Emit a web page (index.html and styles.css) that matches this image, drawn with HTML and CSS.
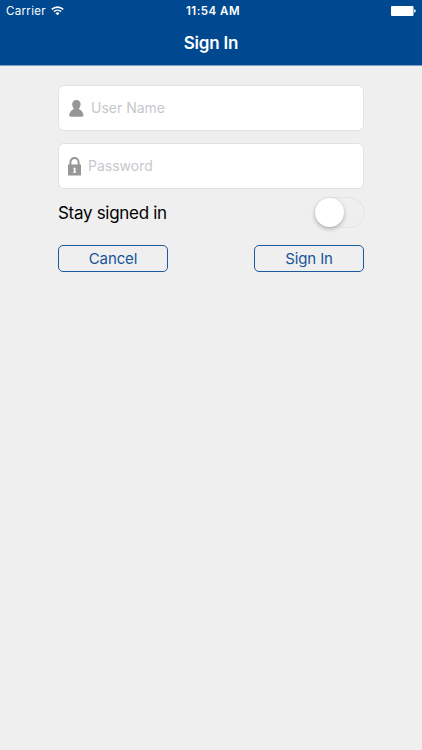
FILE: index.html
```html
<!DOCTYPE html>
<html lang="en">
<head>
<meta charset="utf-8">
<title>Sign In</title>
<link rel="stylesheet" href="styles.css">
</head>
<body>
<header class="header">
  <div class="status">
    <div class="carrier"><span>Carrier</span>
      <svg class="wifi" viewBox="0 0 13 10" fill="none" stroke="#fff" stroke-width="1.6"><path d="M.8 3.4a8.2 8.2 0 0 1 11.4 0M2.9 5.7a5.2 5.2 0 0 1 7.2 0"/><path d="M4.5 7.2a2.9 2.9 0 0 1 4 0l-2 2.1z" fill="#fff" stroke="none"/></svg>
    </div>
    <span class="time">11:54 AM</span>
    <svg class="battery" viewBox="0 0 25 10" fill="#fff"><rect width="22.5" height="10" rx="1"/><path d="M23.2 3.3q1.6.3 1.6 1.7t-1.6 1.7z"/></svg>
  </div>
  <h1 class="title">Sign In</h1>
</header>
<main class="form">
  <label class="field field-user">
    <svg class="user" viewBox="0 0 15 17" fill="#969696"><path d="M7.400 0C4.700 0 3.200 1.700 3.200 4.300c0 1.900.8 3.500 1.900 4.500C2.300 10 .3 12.400.1 15.900c2.200 1.200 12.400 1.200 14.500 0-.2-3.500-2.200-5.900-5-7.100 1.200-1 2-2.600 2-4.500C11.600 1.700 10.100 0 7.400 0z"/></svg>
    <input class="input" type="text" placeholder="User Name">
  </label>
  <label class="field field-pass">
    <svg class="lock" viewBox="0 0 13 19"><path d="M2.400 9V5.200a4.100 4.100 0 0 1 8.200 0V9" fill="none" stroke="#969696" stroke-width="2"/><rect y="7.500" width="13" height="11" rx=".5" fill="#969696"/><path d="M5.400 10.700h2.100v4h.7v1.100H5v-1.100h.8v-2.900h-.4z" fill="#fff"/></svg>
    <input class="input" type="password" placeholder="Password">
  </label>
  <div class="stay"><span class="stay-text">Stay signed in</span><span class="switch"><span class="knob"></span></span></div>
  <div class="actions"><button class="button">Cancel</button><button class="button">Sign In</button></div>
</main>
</body>
</html>
```
FILE: styles.css
```css
* { box-sizing: border-box; }
body { margin: 0; min-height: 750px; background: #efefef; font-family: Inter, "Liberation Sans", sans-serif; }
.header { height: 66px; background: #004990; border-bottom: 1px solid #7f9fc4; color: #fff; }
.status { height: 22px; padding: 0 6px; display: grid; grid-template-columns: 1fr auto 1fr; align-items: center; font-size: 11.5px; }
.carrier { display: flex; align-items: center; gap: 5px; letter-spacing: .32px; }
.wifi { width: 13px; height: 10px; }
.time { padding-left: 4px; font-weight: 600; letter-spacing: .5px; }
.battery { width: 25px; height: 10px; justify-self: end; }
.title { margin: 0; font-size: 17px; line-height: 43px; font-weight: 600; text-align: center; letter-spacing: -.2px; }
.form { width: 306px; margin: 19px 0 0 58px; }
.field { display: flex; align-items: center; height: 46px; background: #fff; border: 1px solid #e2e2e2; border-radius: 6px; }
.field-user { padding-left: 10px; gap: 7px; }
.field-pass { padding-left: 9px; gap: 7px; margin-top: 12px; }
.user { width: 15px; height: 17px; }
.lock { width: 13px; height: 19px; }
.input { flex: 1; min-width: 0; padding: 0 0 2px; border: 0; outline: 0; background: none; font: 400 14px Inter, "Liberation Sans", sans-serif; }
.input::placeholder { color: #c7c7cd; opacity: 1; }
.stay { display: flex; align-items: center; justify-content: space-between; height: 32px; margin: 8px -1px 0 0; }
.stay-text { font-size: 17px; letter-spacing: -.3px; line-height: 30px; }
.switch { width: 51px; height: 31px; margin-top: -2px; border: 1px solid #e3e3e3; border-radius: 16px; }
.knob { display: block; width: 29px; height: 29px; border-radius: 50%; background: #fff; box-shadow: 0 2px 4px rgba(0,0,0,.26); }
.actions { display: flex; justify-content: space-between; margin-top: 16px; }
.button { width: 110px; height: 27px; padding: 0 0 1px; border: 1px solid #1d5a9c; border-radius: 5px; background: none; color: #175499; font: 400 15px Inter, "Liberation Sans", sans-serif; letter-spacing: -.1px; }
```
